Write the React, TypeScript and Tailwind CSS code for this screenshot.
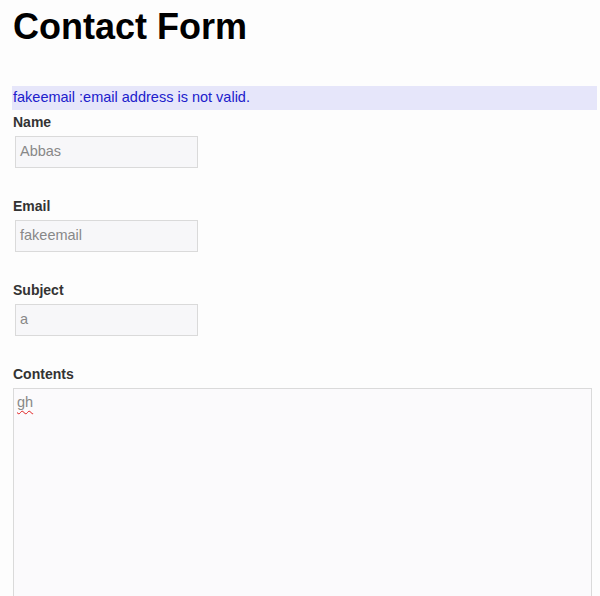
const fields = [
  { label: 'Name', value: 'Abbas' },
  { label: 'Email', value: 'fakeemail' },
  { label: 'Subject', value: 'a' },
];

export default function App() {
  return (
    <div className="min-h-[596px] bg-[#fdfdfd] font-['Liberation_Sans',Arial,sans-serif] overflow-hidden">
      <h1 className="pt-[6px] pl-[13px] text-[36px] leading-[42px] font-bold text-black">Contact Form</h1>

      <div className="mt-[38px] ml-[12px] w-[585px] h-[24px] flex items-center pl-[1px] bg-[#e6e6fa] text-[14.5px] text-[#2020cc]">
        fakeemail :email address is not valid.
      </div>

      <div className="pl-[13px] pt-[4px]">
        {fields.map((f) => (
          <div key={f.label} className="h-[84px]">
            <label className="block text-[14px] leading-[17px] font-bold text-[#333]">{f.label}</label>
            <div className="mt-[5px] ml-[2px] w-[183px] h-[32px] flex items-center pl-[4px] border border-[#dadada] bg-[#f7f7f9] text-[14.5px] text-[#888]">
              {f.value}
            </div>
          </div>
        ))}
        <label className="block text-[14px] leading-[17px] font-bold text-[#333]">Contents</label>
        <div className="mt-[5px] w-[579px] h-[220px] border border-[#dadada] bg-[#fbfafc] pl-[3px] pt-[5px] text-[14.5px] leading-[17px] text-[#888]">
          <span className="underline decoration-wavy decoration-[#e02020] decoration-1 underline-offset-[3px] [text-decoration-skip-ink:none]">gh</span>
        </div>
      </div>
    </div>
  );
}
